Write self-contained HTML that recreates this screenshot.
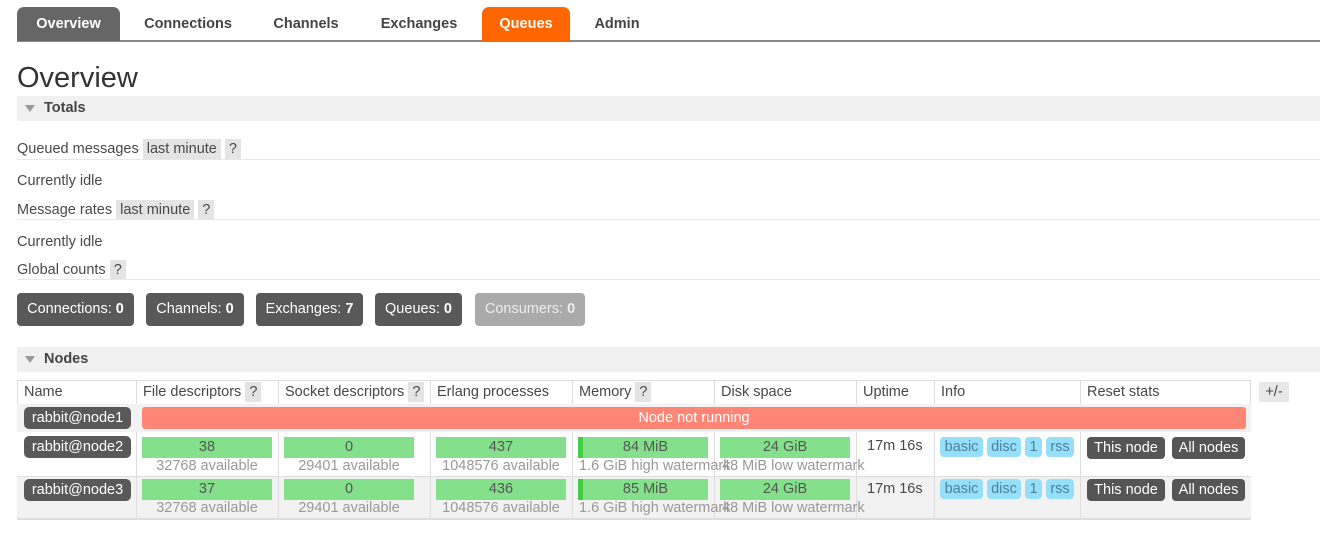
<!DOCTYPE html>
<html><head><meta charset="utf-8"><style>
*{margin:0;padding:0;box-sizing:border-box}
body{width:1320px;height:535px;background:#fff;font-family:"Liberation Sans",Arial,sans-serif;font-size:14.5px;color:#484848;position:relative;overflow:hidden}
.a{position:absolute;white-space:nowrap}
.tab{position:absolute;top:7px;height:34px;line-height:34px;text-align:center;font-weight:bold;font-size:14.5px;color:#444;border-radius:7px 7px 0 0}
.bar{position:absolute;left:17px;right:0;background:#f0f0f0;height:25px;font-weight:bold;font-size:14.5px;color:#444;line-height:25px;padding-left:27px}
.bar:before{content:"";position:absolute;left:8px;top:9px;border-left:5px solid transparent;border-right:5px solid transparent;border-top:7px solid #999}
.hr{position:absolute;left:17px;right:0;height:1px;background:#e8e8e8}
.tag{background:#e4e4e4;padding:2px 4px}
.cnt{position:absolute;top:293px;height:33px;line-height:33px;background:#595959;color:#fff;border-radius:4px;text-align:center;font-size:14.5px}
.cell{position:absolute;background:#84e08a;height:21px;line-height:21px;text-align:center;color:#555;font-size:14.5px}
.sub{position:absolute;color:#999;font-size:14.5px;text-align:center}
.nm{position:absolute;left:24px;width:107px;height:22px;line-height:22px;background:#595959;color:#fff;border-radius:5px;text-align:center}
.bl{position:absolute;background:#96dff8;color:#4a7fa0;height:20px;line-height:20px;border-radius:4px;text-align:center}
.bt{position:absolute;background:#555;color:#fff;height:22px;line-height:22px;border-radius:4px;text-align:center}
.vl{position:absolute;width:1px;background:#ddd}
</style></head><body>
<div class="a" style="left:17px;top:40px;width:1303px;height:2px;background:#888"></div>
<div class="tab" style="left:17px;width:103px;background:#666;color:#fff">Overview</div>
<div class="tab" style="left:128px;width:120px">Connections</div>
<div class="tab" style="left:260px;width:92px">Channels</div>
<div class="tab" style="left:366px;width:106px">Exchanges</div>
<div class="tab" style="left:482px;width:88px;background:#f60;color:#fff">Queues</div>
<div class="tab" style="left:582px;width:70px">Admin</div>
<div class="a" style="left:17px;top:62px;font-size:29px;color:#333">Overview</div>
<div class="bar" style="top:96px">Totals</div>
<div class="a" style="left:17px;top:141px">Queued messages <span class="tag">last minute</span> <span class="tag">?</span></div>
<div class="hr" style="top:159px"></div>
<div class="a" style="left:17px;top:173px">Currently idle</div>
<div class="a" style="left:17px;top:202px">Message rates <span class="tag">last minute</span> <span class="tag">?</span></div>
<div class="hr" style="top:219px"></div>
<div class="a" style="left:17px;top:234px">Currently idle</div>
<div class="a" style="left:17px;top:262px">Global counts <span class="tag">?</span></div>
<div class="hr" style="top:279px"></div>
<div class="cnt" style="left:17px;width:117px">Connections: <b>0</b></div>
<div class="cnt" style="left:146px;width:98px">Channels: <b>0</b></div>
<div class="cnt" style="left:256px;width:107px">Exchanges: <b>7</b></div>
<div class="cnt" style="left:375px;width:87px">Queues: <b>0</b></div>
<div class="cnt" style="left:475px;width:110px;background:#aaa;color:#eee">Consumers: <b>0</b></div>
<div class="bar" style="top:347px">Nodes</div>
<div class="a" style="left:17px;top:380px;width:1234px;height:138px;border:1px solid #ddd;background:#fff"></div>
<div class="a" style="left:17px;top:404px;width:1234px;height:114px;background:#f2f2f2"></div>
<div class="a" style="left:17px;top:432px;width:1234px;height:44px;background:#fff"></div>
<div class="a" style="left:17px;top:476px;width:1234px;height:1px;background:#ddd"></div>
<div class="a" style="left:17px;top:518px;width:1234px;height:2px;background:#ddd"></div>
<div class="vl" style="left:136px;top:380px;height:24px"></div>
<div class="vl" style="left:278px;top:380px;height:24px"></div>
<div class="vl" style="left:430px;top:380px;height:24px"></div>
<div class="vl" style="left:572px;top:380px;height:24px"></div>
<div class="vl" style="left:714px;top:380px;height:24px"></div>
<div class="vl" style="left:856px;top:380px;height:24px"></div>
<div class="vl" style="left:934px;top:380px;height:24px"></div>
<div class="vl" style="left:1080px;top:380px;height:24px"></div>
<div class="vl" style="left:136px;top:432px;height:86px"></div>
<div class="vl" style="left:278px;top:432px;height:86px"></div>
<div class="vl" style="left:430px;top:432px;height:86px"></div>
<div class="vl" style="left:572px;top:432px;height:86px"></div>
<div class="vl" style="left:714px;top:432px;height:86px"></div>
<div class="vl" style="left:856px;top:432px;height:86px"></div>
<div class="vl" style="left:934px;top:432px;height:86px"></div>
<div class="vl" style="left:1080px;top:432px;height:86px"></div>
<div class="a" style="left:24px;top:384px">Name</div>
<div class="a" style="left:143px;top:384px">File descriptors <span class="tag">?</span></div>
<div class="a" style="left:285px;top:384px">Socket descriptors <span class="tag">?</span></div>
<div class="a" style="left:437px;top:384px">Erlang processes</div>
<div class="a" style="left:579px;top:384px">Memory <span class="tag">?</span></div>
<div class="a" style="left:721px;top:384px">Disk space</div>
<div class="a" style="left:863px;top:384px">Uptime</div>
<div class="a" style="left:941px;top:384px">Info</div>
<div class="a" style="left:1087px;top:384px">Reset stats</div>
<div class="a" style="left:1259px;top:382px;width:30px;height:20px;background:#e8e8e8;text-align:center;line-height:20px">+/-</div>
<div class="nm" style="top:407px">rabbit@node1</div>
<div class="a" style="left:142px;top:407px;width:1104px;height:22px;background:#ff8577;color:#fff;text-align:center;line-height:22px;border-radius:3px">Node not running</div>
<div class="nm" style="top:436px">rabbit@node2</div>
<div class="nm" style="top:479px">rabbit@node3</div>
<div class="cell" style="left:142px;top:437px;width:130px">38</div>
<div class="sub" style="left:142px;top:458px;width:130px">32768 available</div>
<div class="cell" style="left:284px;top:437px;width:130px">0</div>
<div class="sub" style="left:284px;top:458px;width:130px">29401 available</div>
<div class="cell" style="left:436px;top:437px;width:130px">437</div>
<div class="sub" style="left:433px;top:458px;width:136px">1048576 available</div>
<div class="cell" style="left:578px;top:437px;width:130px;border-left:5px solid #4c4">84 MiB</div>
<div class="sub" style="left:579px;top:458px;text-align:left">1.6 GiB high watermark</div>
<div class="cell" style="left:720px;top:437px;width:130px">24 GiB</div>
<div class="sub" style="left:722px;top:458px;text-align:left">48 MiB low watermark</div>
<div class="a" style="left:867px;top:438px">17m 16s</div>
<div class="bl" style="left:940px;top:437px;width:43px">basic</div>
<div class="bl" style="left:987px;top:437px;width:34px">disc</div>
<div class="bl" style="left:1025px;top:437px;width:17px">1</div>
<div class="bl" style="left:1046px;top:437px;width:28px">rss</div>
<div class="bt" style="left:1087px;top:437px;width:78px">This node</div>
<div class="bt" style="left:1172px;top:437px;width:73px">All nodes</div>
<div class="cell" style="left:142px;top:479px;width:130px">37</div>
<div class="sub" style="left:142px;top:500px;width:130px">32768 available</div>
<div class="cell" style="left:284px;top:479px;width:130px">0</div>
<div class="sub" style="left:284px;top:500px;width:130px">29401 available</div>
<div class="cell" style="left:436px;top:479px;width:130px">436</div>
<div class="sub" style="left:433px;top:500px;width:136px">1048576 available</div>
<div class="cell" style="left:578px;top:479px;width:130px;border-left:5px solid #4c4">85 MiB</div>
<div class="sub" style="left:579px;top:500px;text-align:left">1.6 GiB high watermark</div>
<div class="cell" style="left:720px;top:479px;width:130px">24 GiB</div>
<div class="sub" style="left:722px;top:500px;text-align:left">48 MiB low watermark</div>
<div class="a" style="left:867px;top:481px">17m 16s</div>
<div class="bl" style="left:940px;top:479px;width:43px">basic</div>
<div class="bl" style="left:987px;top:479px;width:34px">disc</div>
<div class="bl" style="left:1025px;top:479px;width:17px">1</div>
<div class="bl" style="left:1046px;top:479px;width:28px">rss</div>
<div class="bt" style="left:1087px;top:479px;width:78px">This node</div>
<div class="bt" style="left:1172px;top:479px;width:73px">All nodes</div>
</body></html>
